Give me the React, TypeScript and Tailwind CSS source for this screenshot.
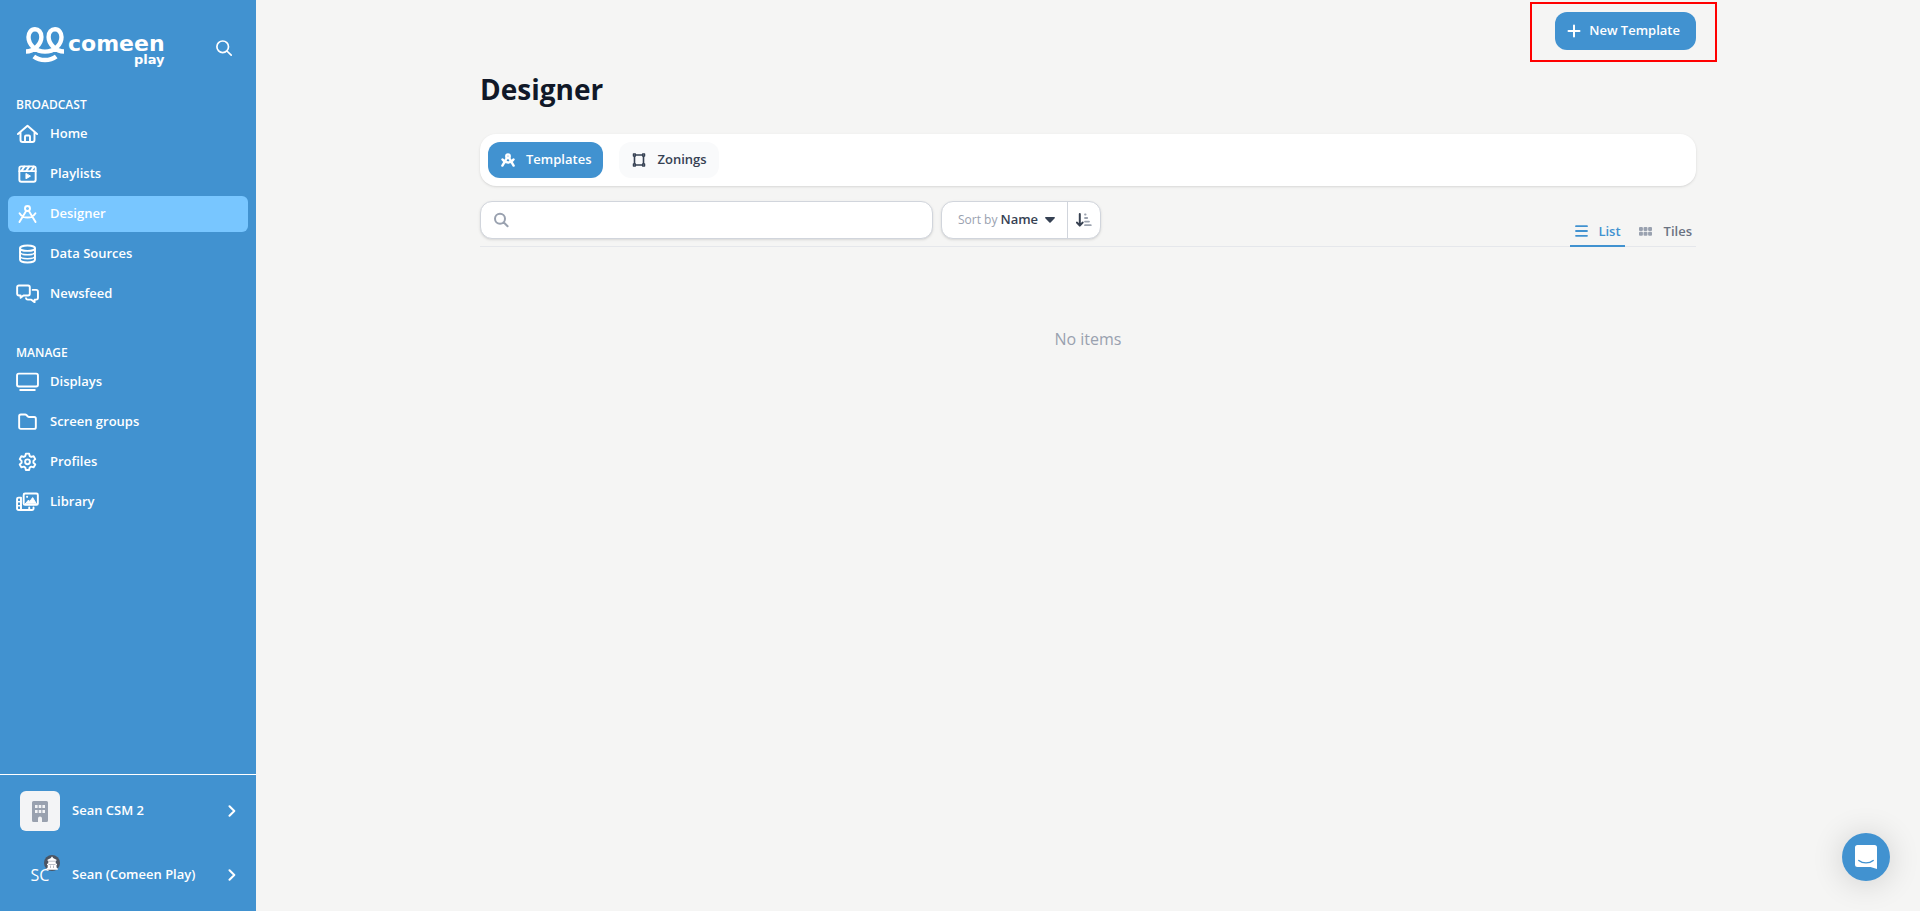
import { FC, ReactNode } from 'react';
import clsx from 'clsx';

type IconProps = {
  children: ReactNode;
  viewBox?: string;
  className?: string;
};

const Icon: FC<IconProps> = ({ children, viewBox = '0 0 24 20', className = 'h-5 w-[23px]' }) => (
  <svg
    viewBox={viewBox}
    className={clsx('shrink-0', className)}
    fill="none"
    stroke="currentColor"
    strokeWidth="2"
    strokeLinecap="round"
    strokeLinejoin="round"
    aria-hidden="true"
  >
    {children}
  </svg>
);

const compass = (
  <>
    <circle cx="12" cy="4.2" r="2.6" />
    <path d="M10.7 6.6 3.6 18.4M13.3 6.6l7.1 11.8M3.7 9.2C7.5 15.2 16.5 15.2 20.3 9.2" />
  </>
);

type NavItem = {
  label: string;
  icon: ReactNode;
  active?: boolean;
};

const broadcast: NavItem[] = [
  {
    label: 'Home',
    icon: (
      <>
        <path d="M2 10 12 1.3 22 10M4.7 8.2v8c0 1.4.8 2.2 2.2 2.2h10.2c1.4 0 2.2-.8 2.2-2.2v-8" />
        <path d="M9.4 18v-5.4c0-.7.4-1.1 1.1-1.1h3c.7 0 1.1.4 1.1 1.1V18" />
      </>
    ),
  },
  {
    label: 'Playlists',
    icon: (
      <>
        <rect x="3.5" y="2" width="17" height="16" rx="2" />
        <path d="M3.5 7h17" />
        <path d="M6 6.4l2.6-4M11 6.4l2.6-4M16 6.4l2.6-4" strokeWidth="2.2" />
        <path d="M10.4 9.8v5.2l4.4-2.6z" fill="currentColor" strokeWidth="1" />
      </>
    ),
  },
  { label: 'Designer', icon: compass, active: true },
  {
    label: 'Data Sources',
    icon: (
      <>
        <ellipse cx="12" cy="3.9" rx="7.8" ry="2.8" />
        <path d="M4.2 3.9v12.2c0 1.6 3.5 2.8 7.8 2.8s7.8-1.2 7.8-2.8V3.9" />
        <path d="M4.2 8c0 1.600 3.500 2.800 7.800 2.800s7.800-1.200 7.800-2.800M4.200 12.200c0 1.600 3.500 2.800 7.800 2.800s7.800-1.200 7.800-2.800" strokeWidth="1.600" />
      </>
    ),
  },
  {
    label: 'Newsfeed',
    icon: (
      <>
        <path d="M3 1.200h9.600c1.100 0 1.800.7 1.800 1.800v6.800c0 1.100-.7 1.800-1.800 1.800H7.800L4.800 14v-2.400H3c-1.100 0-1.800-.7-1.800-1.800V3c0-1.100.7-1.800 1.800-1.800z" />
        <path d="M17.400 5.700h3.600c1.200 0 1.900.7 1.900 1.900v6.400c0 1.200-.7 1.900-1.900 1.900h-1.600v2.600l-3.400-2.600h-3.700c-1 0-1.700-.6-1.900-1.600" />
      </>
    ),
  },
];

const manage: NavItem[] = [
  {
    label: 'Displays',
    icon: (
      <>
        <rect x="1.1" y="1.3" width="21.8" height="13.4" rx="1.8" />
        <path d="M4.4 18.4h15.2" />
      </>
    ),
  },
  {
    label: 'Screen groups',
    icon: (
      <path d="M5 2.200h4.600c.5 0 .9.200 1.200.5l1.600 1.600c.3.3.7.5 1.200.5H19c1 0 1.700.7 1.700 1.700v9c0 1-.7 1.700-1.700 1.700H5c-1 0-1.700-.7-1.700-1.700V3.900c0-1 .7-1.700 1.700-1.700z" />
    ),
  },
  {
    label: 'Profiles',
    icon: (
      <>
        <path d="M10.300 1.300h3.400l.6 2.500 1.600.9 2.500-.7 1.700 3-1.900 1.800v2l1.900 1.800-1.700 3-2.500-.7-1.600.9-.6 2.500h-3.400l-.6-2.500-1.600-.9-2.500.7-1.700-3 1.900-1.800v-2L3.900 7l1.700-3 2.500.7 1.600-.9z" />
        <circle cx="12" cy="9.8" r="2.5" />
      </>
    ),
  },
  {
    label: 'Library',
    icon: (
      <>
        <rect x="8" y="1.2" width="14.8" height="11.8" rx="1.4" />
        <path d="M9.800 11.800 13 8l1.400 1.400 3-4 3.800 6.400z" fill="currentColor" strokeWidth="1" />
        <circle cx="11.6" cy="4.6" r="1.1" fill="currentColor" stroke="none" />
        <path d="M5.200 5.400H2.800c-1 0-1.700.6-1.700 1.600v9.800c0 1 .7 1.600 1.700 1.600h13.800c1 0 1.700-.6 1.700-1.600v-1M5.200 5.400v12.800M13.800 15.800v2.400" />
        <path d="M1.400 9.700h3.600M1.400 14h3.600" strokeWidth="1.6" />
      </>
    ),
  },
];

const Logo: FC = () => (
  <a href="#" className="flex items-start gap-1 text-white" aria-label="comeen play">
    <svg
      viewBox="0 0 38 36"
      className="h-9 w-[38px] shrink-0"
      fill="none"
      stroke="currentColor"
      strokeWidth="4.4"
      aria-hidden="true"
    >
      <path d="M0 24.500C8 24.500 15.400 17 15.400 10C15.400 5 12.500 2.300 9 2.300C5 2.300 2.500 5.800 2.500 10C2.500 18 10 24.600 19 24.600C28 24.600 35.500 18 35.500 10C35.500 5.800 33 2.300 29 2.300C25.500 2.300 22.600 5 22.600 10C22.600 17 30 24.500 38 24.500" />
      <path d="M7.800 29.400C14 34.200 24 34.200 30.200 29.400" />
    </svg>
    <span className="flex flex-col items-end pt-[7px] font-['DejaVu_Sans',sans-serif] font-bold">
      <span className="text-[22px] leading-5">comeen</span>
      <span className="text-[13px] leading-3">play</span>
    </span>
  </a>
);

const NavSection: FC<{ title: string; items: NavItem[] }> = ({ title, items }) => (
  <section>
    <h2 className="px-2 text-xs leading-4 font-semibold text-white uppercase">{title}</h2>
    <ul className="mt-[3px] space-y-1">
      {items.map(({ label, icon, active }) => (
        <li key={label}>
          <a
            href="#"
            className={clsx(
              'flex h-9 items-center gap-[11px] rounded-md px-2 text-[13px] font-semibold text-white',
              active && 'bg-[#78c6ff]',
            )}
          >
            <Icon>{icon}</Icon>
            {label}
          </a>
        </li>
      ))}
    </ul>
  </section>
);

const AccountRow: FC<{ label: string; children: ReactNode }> = ({ label, children }) => (
  <button type="button" className="flex h-16 w-full items-center gap-3 px-5 text-[13px] font-semibold text-white">
    {children}
    <span className="flex-1 text-left">{label}</span>
    <Icon viewBox="0 0 8 12" className="h-3 w-2">
      <path d="m1.500 1.200 4.800 4.800-4.800 4.800" />
    </Icon>
  </button>
);

const Sidebar: FC = () => (
  <aside className="flex w-64 shrink-0 flex-col bg-[#4192d0]">
    <div className="flex h-[97px] items-start justify-between pt-[27px] pr-6 pl-[26px]">
      <Logo />
      <button type="button" aria-label="Search" className="mt-[13px] text-white">
        <Icon viewBox="0 0 16 16" className="h-4 w-4">
          <path d="M12.500 6.800a5.800 5.800 0 1 1-11.600 0 5.800 5.800 0 0 1 11.600 0zM10.900 11l4.300 4.200" strokeWidth="1.7" />
        </Icon>
      </button>
    </div>
    <nav className="flex-1 space-y-[33px] px-2">
      <NavSection title="Broadcast" items={broadcast} />
      <NavSection title="Manage" items={manage} />
    </nav>
    <div className="border-t border-white py-1">
      <AccountRow label="Sean CSM 2">
        <span className="flex h-10 w-10 items-center justify-center rounded-md bg-gray-100 text-gray-400">
          <svg viewBox="0 0 16 21" className="h-[21px] w-4" fill="currentColor" aria-hidden="true">
            <path
              fillRule="evenodd"
              d="M1.500 0h13A1.500 1.500 0 0 1 16 1.500v18a1.500 1.500 0 0 1-1.500 1.500H10v-3.500a2 2 0 0 0-4 0V21H1.500A1.500 1.500 0 0 1 0 19.500v-18A1.500 1.500 0 0 1 1.500 0zM3 4v3h2.600V4zm3.700 0v3h2.600V4zm3.700 0v3H13V4zM3 9v3h2.600V9zm3.700 0v3h2.600V9zm3.700 0v3H13V9z"
            />
          </svg>
        </span>
      </AccountRow>
      <AccountRow label="Sean (Comeen Play)">
        <span className="relative flex h-10 w-10 items-center justify-center text-base font-medium">
          SC
          <svg viewBox="0 0 16 16" className="absolute top-0 right-0 h-4 w-4" aria-hidden="true">
            <circle cx="8" cy="8" r="8" fill="#4b5563" />
            <path
              fill="#fff"
              d="M7.500 1.700h1l.5 1.200 3.500 1.800v1.100h-.8v2.400l1.300.8v1H12.500V12.500l1.300 1v1.300H2.400v-1.300l1.300-1V10H3V9l1.300-.8V5.800h-.8V4.700L7 2.900z"
            />
            <path stroke="#9ca3af" strokeWidth="0.7" d="M4.500 6.200h7M4.500 9.500h7M6.500 10.500V13M9.500 10.500V13" />
          </svg>
        </span>
      </AccountRow>
    </div>
  </aside>
);

const App: FC = () => (
  <div className="flex min-h-screen bg-stone-100 font-['Open_Sans','Noto_Sans',sans-serif] text-gray-900">
    <Sidebar />
    <main className="min-w-0 flex-1">
      <div className="mx-auto max-w-7xl px-8 pt-3">
        <div className="flex justify-end">
          <div className="relative">
            <button
              type="button"
              className="flex h-[38px] items-center gap-2 rounded-xl bg-[#4192d0] pr-4 pl-3 text-[13px] font-semibold text-white"
            >
              <Icon viewBox="0 0 14 14" className="h-3.5 w-3.5">
                <path d="M7 1.500v11M1.500 7h11" />
              </Icon>
              New Template
            </button>
            {/* Highlight frame */}
            <span className="pointer-events-none absolute -top-2.5 -right-[21px] -bottom-3 -left-[25px] border-2 border-[#ff0000]" />
          </div>
        </div>

        <h1 className="mt-5 text-[28px] leading-[38px] font-bold">Designer</h1>

        <div className="mt-[26px] flex gap-4 rounded-2xl bg-white p-2 shadow">
          <button
            type="button"
            className="flex h-9 items-center gap-2.5 rounded-xl bg-[#4192d0] px-3 text-[13px] font-semibold text-white"
          >
            <Icon className="h-4 w-4">
              <g strokeWidth="3.6">{compass}</g>
            </Icon>
            Templates
          </button>
          <button
            type="button"
            className="flex h-9 items-center gap-2.5 rounded-xl bg-gray-50 px-3 text-[13px] font-semibold text-gray-700"
          >
            <Icon viewBox="0 0 16 16" className="h-4 w-4">
              <path d="M4 3h8M4 13h8M3.500 4v8M12.500 4v8" strokeWidth="1.6" />
              <path
                d="M2.400 2h2v2h-2zM11.600 2h2v2h-2zM2.400 12h2v2h-2zM11.600 12h2v2h-2z"
                fill="#f9fafb"
                strokeWidth="1.3"
              />
            </Icon>
            Zonings
          </button>
        </div>

        <div className="mt-[15px] flex items-end justify-between border-b border-gray-200">
          <div className="mb-[7px] flex gap-2">
            <label className="flex h-[38px] w-[453px] items-center gap-2 rounded-xl border border-gray-300 bg-white px-3 text-gray-400 shadow-sm">
              <Icon viewBox="0 0 16 16" className="h-4 w-4">
                <path d="M12 6.700a5 5 0 1 1-10 0 5 5 0 0 1 10 0zM10.600 10.300l4 4" />
              </Icon>
              <input type="search" aria-label="Search templates" className="min-w-0 flex-1 text-[13px] text-gray-900 outline-none" />
            </label>
            <div className="flex h-[38px] rounded-xl border border-gray-300 bg-white shadow-sm">
              <label className="flex items-center gap-[3px] pr-3 pl-4 text-xs text-gray-400">
                Sort by
                <select className="appearance-none text-[13px] font-semibold text-gray-700 outline-none">
                  <option>Name</option>
                </select>
                <svg viewBox="0 0 10 6" className="ml-1 h-1.5 w-2.5 text-gray-700" fill="currentColor" aria-hidden="true">
                  <path d="M.8 0h8.400c.7 0 1 .7.500 1.200L5.600 5.600a.9.9 0 0 1-1.200 0L.3 1.200C-.2.700.1 0 .8 0z" />
                </svg>
              </label>
              <button type="button" aria-label="Sort direction" className="flex w-[33px] items-center justify-center border-l border-gray-300">
                <Icon viewBox="0 0 16 14" className="h-3.5 w-4">
                  <path d="M3.800 1v11M1 9.600l2.800 3 2.800-3" stroke="#374151" />
                  <path d="M9 1.500h.6M9 5h2.200M9 8.600h4M9 12.200h5.800" stroke="#9ca3af" strokeWidth="1.8" />
                </Icon>
              </button>
            </div>
          </div>
          <div className="-mb-px flex text-[13px] leading-5 font-semibold">
            <button type="button" className="flex items-center gap-2.5 border-b-2 border-[#4192d0] pr-1 pb-1 pl-[5px] text-[#4192d0]">
              <Icon viewBox="0 0 13 12" className="h-3 w-[13px]">
                <path d="M1 1.200h11M1 6h11M1 10.800h11" strokeWidth="1.8" />
              </Icon>
              List
            </button>
            <button type="button" className="flex items-center gap-3 border-b-2 border-transparent pr-1 pb-1 pl-3.5 text-gray-500">
              <svg viewBox="0 0 13 9" className="h-[9px] w-[13px] text-gray-400" fill="currentColor" aria-hidden="true">
                <rect width="3.9" height="4" rx="1" />
                <rect x="4.55" width="3.9" height="4" rx="1" />
                <rect x="9.1" width="3.9" height="4" rx="1" />
                <rect y="4.8" width="3.9" height="4" rx="1" />
                <rect x="4.55" y="4.8" width="3.9" height="4" rx="1" />
                <rect x="9.1" y="4.8" width="3.9" height="4" rx="1" />
              </svg>
              Tiles
            </button>
          </div>
        </div>

        <p className="mt-20 text-center text-base text-gray-400">No items</p>
      </div>
    </main>

    {/* Messenger launcher */}
    <button
      type="button"
      aria-label="Open chat"
      className="fixed right-[30px] bottom-[30px] flex h-12 w-12 items-center justify-center rounded-full bg-[#4192d0] shadow-[0_2px_32px_rgba(0,0,0,0.16)]"
    >
      <svg viewBox="0 0 22 24" className="h-6 w-[22px]" aria-hidden="true">
        <path d="M2.500 0h17A2.500 2.500 0 0 1 22 2.500V24l-6.500-2h-13A2.500 2.500 0 0 1 0 19.500v-17A2.500 2.500 0 0 1 2.500 0z" fill="#fff" />
        <path d="M3.800 15.500c4 3.200 10.400 3.200 14.400 0" fill="none" stroke="#4192d0" strokeWidth="1.4" strokeLinecap="round" />
      </svg>
    </button>
  </div>
);

export default App;
